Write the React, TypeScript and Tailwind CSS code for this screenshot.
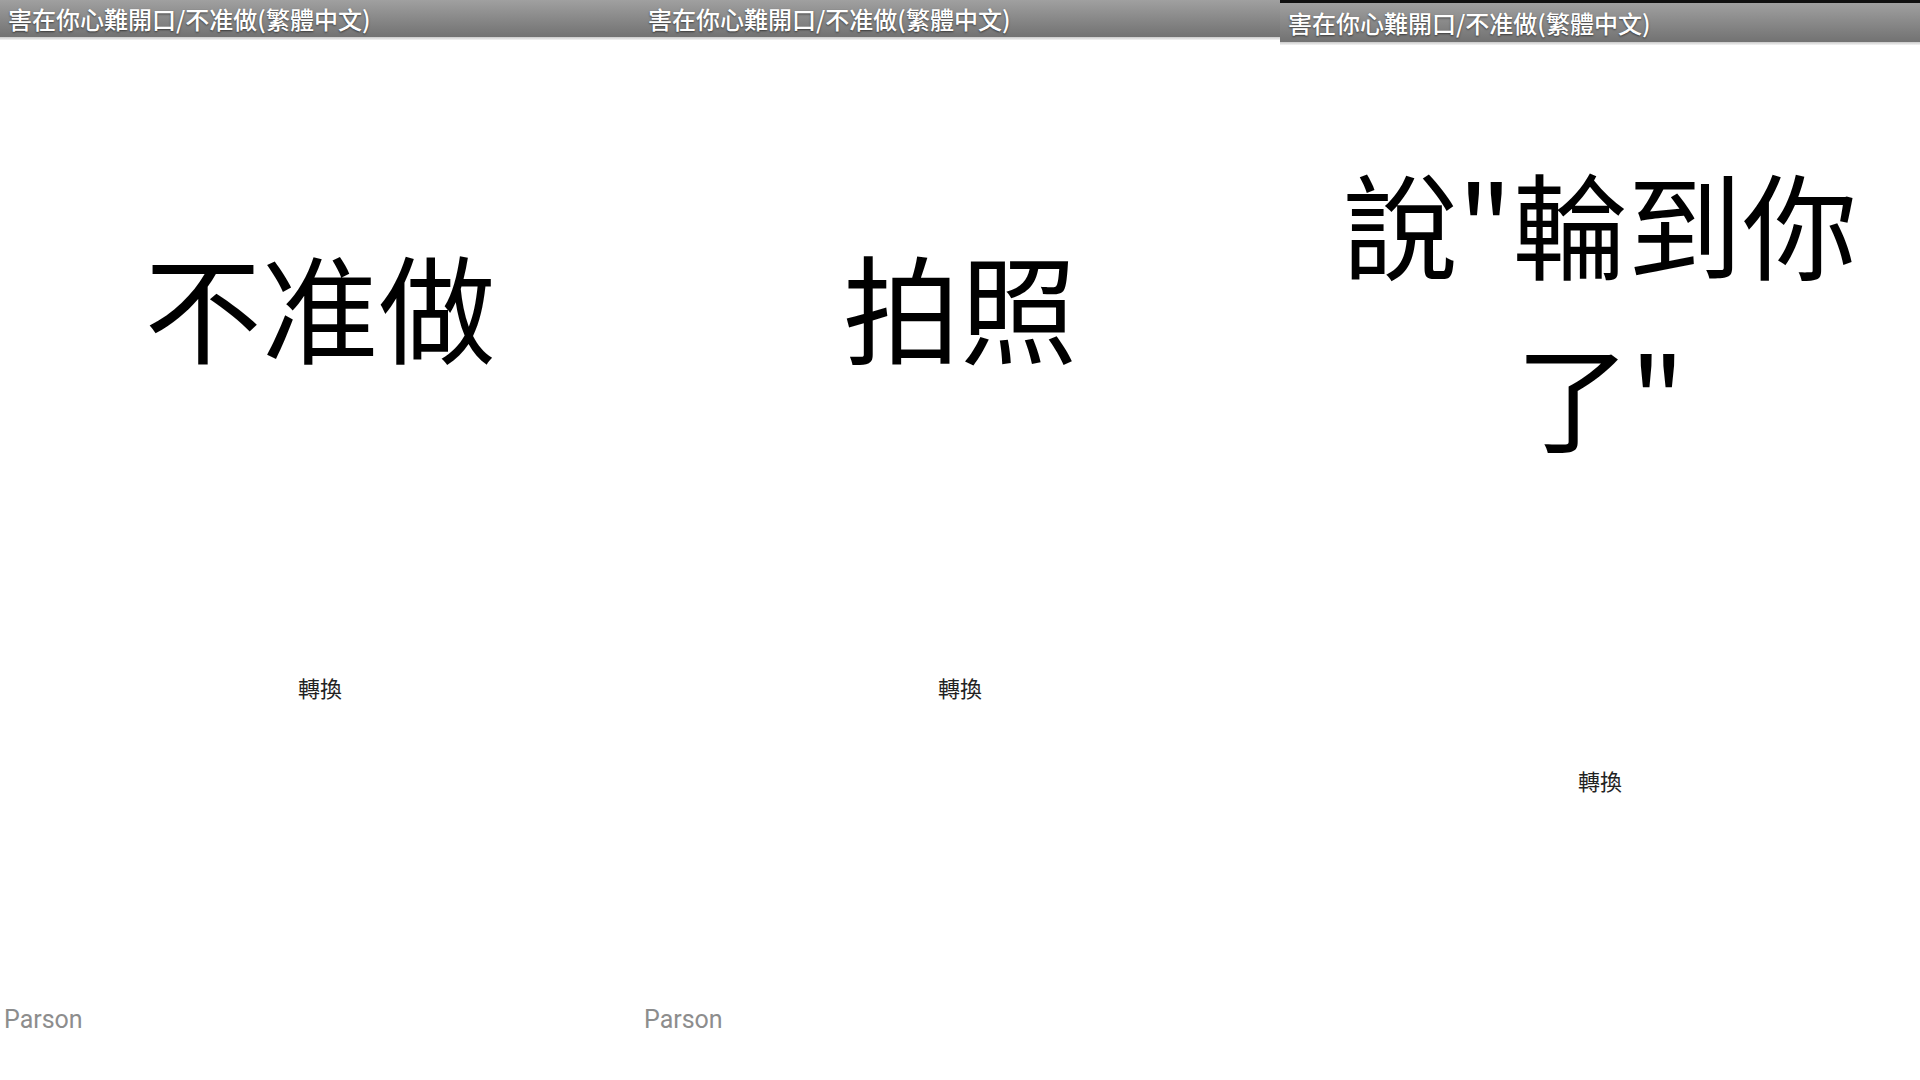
const CJK = "font-['Noto_Sans_CJK_TC','Noto_Sans_CJK_SC',sans-serif]"

interface PanelProps {
  text: string
  third?: boolean
}

function Header({ third }: { third?: boolean }) {
  return (
    <div className="flex flex-col">
      {third && <div className="h-[3px] bg-[#111]" />}
      <div
        className={`flex items-center px-2 bg-linear-to-b from-[#a0a0a0] to-[#727272] ${
          third ? 'h-[39px]' : 'h-[37px]'
        }`}
      >
        <span
          className={`${CJK} text-[24px] leading-none font-medium text-white [text-shadow:0_1px_2px_rgba(0,0,0,0.55)]`}
        >
          害在你心難開口/不准做(繁體中文)
        </span>
      </div>
      <div className="h-[3px] bg-linear-to-b from-[#c9c9c9] to-[#f4f4f4]" />
    </div>
  )
}

function Panel({ text, third }: PanelProps) {
  return (
    <div className="flex flex-col w-[640px] h-full bg-white">
      <Header third={third} />
      <div className="flex flex-col items-center justify-center h-[840px]">
        <p
          className={`${CJK} max-w-[560px] text-center leading-[172px] text-black ${
            third ? 'text-[115px]' : 'text-[117px]'
          }`}
        >
          {text}
        </p>
        <button
          className={`${CJK} h-[30px] text-[22px] leading-[30px] text-[#222] ${
            third ? 'mt-[286px]' : 'mt-[282px]'
          }`}
        >
          轉換
        </button>
      </div>
      {!third && (
        <div className="pt-[126px] pl-[4px]">
          <span className="font-['Roboto',sans-serif] text-[25px] leading-[28px] text-[#8d8d8d]">
            Parson
          </span>
        </div>
      )}
    </div>
  )
}

export default function App() {
  return (
    <div className="flex w-[1920px] h-[1080px] overflow-hidden bg-white">
      <Panel text="不准做" />
      <Panel text="拍照" />
      <Panel text={'說"輪到你了"'} third />
    </div>
  )
}
